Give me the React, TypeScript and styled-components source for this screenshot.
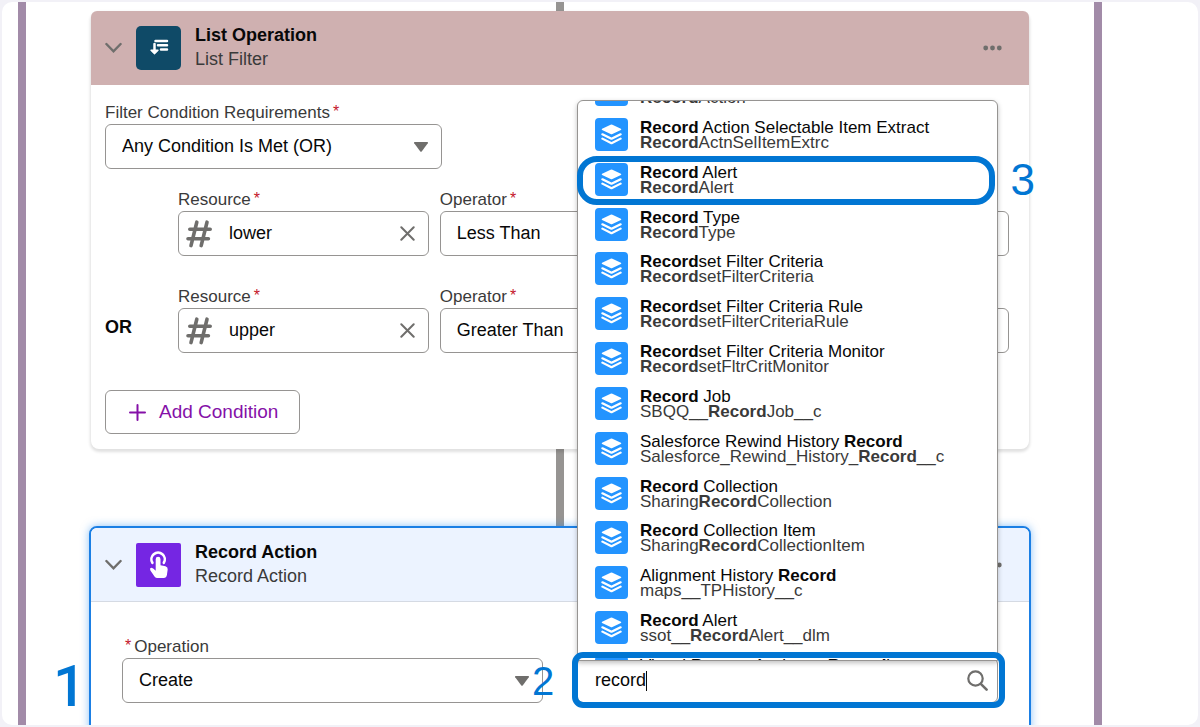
import React from "react";
import styled, { createGlobalStyle } from "styled-components";

const GlobalStyle = createGlobalStyle`
  *, *::before, *::after { box-sizing: border-box; }
  body { margin: 0; background: #f2f1f7; }
  body, button, input, select { font-family: "Liberation Sans", Arial, sans-serif; }
  #root { height: 100vh; }
`;

const Frame = styled.div`
  height: 100%;
  border: 2px solid #f2f1f7;
  border-radius: 12px;
  overflow: hidden;
  background: #fff;
`;

const LoopRegion = styled.main`
  display: flex;
  flex-direction: column;
  min-height: 100%;
  margin: 0 96px 0 16px;
  padding: 0 63px;
  border: solid #a28ba8;
  border-width: 0 8px;
`;

const Connector = styled.div<{ $height: number }>`
  width: 8px;
  height: ${(p) => p.$height}px;
  margin: 0 auto;
  background: #969492;
`;

const Card = styled.section<{ $selected?: boolean }>`
  position: relative;
  border-radius: 8px;
  background: #fff;
  ${(p) =>
    p.$selected
      ? "border: 2px solid #1b7fe4; box-shadow: 0 0 8px #1b86f080;"
      : "margin: 0 2px; box-shadow: 0 2px 3px 1px #0000001f;"}
`;

const CardHeader = styled.header<{ $tone: "rose" | "blue" }>`
  display: flex;
  align-items: center;
  height: 74px;
  padding: 0 27px 0 14px;
  border-radius: 6px 6px 0 0;
  background: ${(p) => (p.$tone === "rose" ? "#cfb0b0" : "#ecf3ff")};
  border-bottom: 1px solid ${(p) => (p.$tone === "rose" ? "#cfb0b0" : "#d5dae3")};
`;

const IconButton = styled.button`
  display: flex;
  padding: 0;
  border: 0;
  background: none;
  color: #6f6e6c;
`;

const Tile = styled.span<{ $color: string; $radius: number }>`
  display: grid;
  place-items: center;
  width: 45px;
  height: 44px;
  margin: 0 14px;
  border-radius: ${(p) => p.$radius}px;
  background: ${(p) => p.$color};
`;

const Heading = styled.div`
  flex: 1;
  padding-bottom: 2px;
  line-height: 24px;
  font-size: 18px;
`;

const Title = styled.h2`
  margin: 0;
  font-size: 18px;
  font-weight: 700;
  color: #080808;
`;

const Subtitle = styled.p`
  margin: 0;
  color: #3a3a3a;
`;

const FilterBody = styled.div`
  display: flex;
  flex-direction: column;
  align-items: flex-start;
  padding: 18px 20px 15px 14px;
`;

const Field = styled.div<{ $width?: number }>`
  display: flex;
  flex-direction: column;
  justify-content: flex-end;
  min-width: 0;
  width: ${(p) => (p.$width ? `${p.$width}px` : "auto")};
`;

const Label = styled.label`
  line-height: 20px;
  margin-bottom: 1px;
  font-size: 17px;
  color: #3a3a3a;
`;

const Required = styled.span`
  margin: 0 3px;
  font-size: 16px;
  line-height: 1;
  vertical-align: 1px;
  color: #c4162a;
`;

const Control = styled.div`
  display: grid;
  align-items: center;
  height: 45px;
  border: 1px solid #969492;
  border-radius: 6px;
  background: #fff;
`;

const Select = styled.select`
  grid-area: 1 / 1;
  width: 100%;
  height: 100%;
  padding: 0 40px 2px 16px;
  border: 0;
  border-radius: 6px;
  appearance: none;
  background: transparent;
  font-size: 18px;
  color: #080808;
`;

const SelectArrow = styled.svg`
  grid-area: 1 / 1;
  justify-self: end;
  margin-right: 13px;
  pointer-events: none;
`;

const ResourceBox = styled(Control)`
  display: flex;
  gap: 17px;
  padding: 0 13px 0 7px;
`;

const TextInput = styled.input`
  flex: 1;
  min-width: 0;
  padding: 0;
  border: 0;
  outline: 0;
  background: transparent;
  font-size: 18px;
  color: #080808;
`;

const FilterRows = styled.div`
  display: flex;
  flex-direction: column;
  gap: 31px;
  width: 100%;
  padding: 21px 0 37px;
`;

const ConditionRow = styled.div`
  display: grid;
  grid-template-columns: 62px 31fr 31fr 38fr;
  column-gap: 11px;
`;

const Joiner = styled.strong`
  align-self: end;
  line-height: 20px;
  padding-bottom: 16px;
  font-size: 18px;
  color: #080808;
`;

const AddButton = styled.button`
  display: flex;
  align-items: center;
  gap: 13px;
  height: 44px;
  padding: 0 21px 0 23px;
  border: 1px solid #969492;
  border-radius: 6px;
  background: #fff;
  font-size: 19px;
  color: #8510a8;
`;

const ActionBody = styled.div`
  display: grid;
  grid-template-columns: 1fr 1fr;
  column-gap: 34px;
  padding: 35px 31px 60px;
`;

const Lookup = styled.div`
  position: relative;
`;

const SearchBox = styled(Control)`
  display: flex;
  padding: 0 9px 0 17px;
`;

const SearchInput = styled(TextInput)`
  flex: none;
  field-sizing: content;
`;

const Caret = styled.span`
  width: 1px;
  height: 20px;
  margin-right: auto;
  background: #080808;
`;

const Menu = styled.div`
  position: absolute;
  z-index: 1;
  left: 0;
  right: 0;
  bottom: 42px;
  height: 561px;
  overflow: hidden;
  border: 1px solid #969492;
  border-radius: 6px 6px 0 0;
  background: #fff;
  box-shadow: 0 2px 5px #00000040;
`;

const Options = styled.ul`
  display: flex;
  flex-direction: column;
  justify-content: space-between;
  height: 616px;
  margin: -28px 0 0;
  padding: 0 17px;
  list-style: none;
`;

const Option = styled.li`
  display: flex;
  gap: 12px;
  height: 33px;
`;

const ObjectTile = styled.span`
  display: grid;
  place-items: center;
  width: 33px;
  height: 33px;
  border-radius: 4px;
  background: #2394ff;
`;

const OptionText = styled.div`
  line-height: 15px;
  padding-top: 2px;
  font-size: 17px;
  white-space: nowrap;
  color: #080808;
`;

const ApiName = styled.div`
  color: #3a3a3a;
`;

const Callout = styled.div<{ $inset: string; $radius: number }>`
  position: absolute;
  z-index: 2;
  inset: ${(p) => p.$inset};
  border: 6px solid #0176d3;
  border-radius: ${(p) => p.$radius}px;
  pointer-events: none;
`;

const Step = styled.span<{ $place: string; $size: number }>`
  position: absolute;
  z-index: 2;
  ${(p) => p.$place}
  line-height: 1;
  font-size: ${(p) => p.$size}px;
  color: #0176d3;
`;

const FirstStep = styled(Step)`
  font-family: Roboto, "Liberation Sans", sans-serif;
  font-weight: 500;
`;

const Chevron = () => (
  <svg width="17" height="11" viewBox="0 0 17 11" fill="none" stroke="currentColor" strokeWidth="2.4" strokeLinecap="round">
    <path d="M1.4 2 8.500 9.300l7.100-7.300" />
  </svg>
);

const Dots = () => (
  <svg width="19" height="6" viewBox="0 0 19 6" fill="currentColor">
    <circle cx="2.700" cy="3" r="2.400" />
    <circle cx="9.500" cy="3" r="2.400" />
    <circle cx="16.300" cy="3" r="2.400" />
  </svg>
);

const Arrow = () => (
  <SelectArrow width="14" height="10" viewBox="0 0 14 10" fill="#6f6e6c">
    <path d="M.6 0h12.800q.9.200.4 1.200L7.700 9.500q-.7.700-1.400 0L.2 1.200Q-.3.200.6 0z" />
  </SelectArrow>
);

const ListGlyph = () => (
  <svg width="20" height="18" viewBox="0 0 20 18" fill="none" stroke="#fff" strokeLinecap="round" strokeLinejoin="round">
    <path d="M6.500 2h11.500M9 6.300h9M12 10.600h6" strokeWidth="2.500" />
    <path d="M5.500 5v8" strokeWidth="2.500" />
    <path d="M2 11.300h7l-3.500 3.500z" strokeWidth="1.400" fill="#fff" />
  </svg>
);

const TouchGlyph = () => (
  <svg width="20" height="28" viewBox="0 0 20 28" fill="#fff">
    <path d="M3.400 11.800A6.700 6.700 0 1 1 14.800 11.800" fill="none" stroke="#fff" strokeWidth="2.600" strokeLinecap="round" />
    <path d="M6.700 8.200a2.400 2.400 0 0 1 4.800 0v6l5 1.100q2.500.8 2.200 3.200l-.8 5.500q-.5 3-3.200 3H8.200q-1.500 0-2.500-1.300L1.400 19.500Q.4 17 2.400 16.800q1.500 0 4.300 3z" />
  </svg>
);

const Hash = () => (
  <svg width="26" height="28" viewBox="0 0 26 28" fill="none" stroke="#6f6e6c" strokeWidth="3.600" strokeLinecap="round">
    <path d="M10.800 2.200 5 25.600M21 2.200l-5.800 23.400M3.800 9.200h20.400M2 18.800h20.400" />
  </svg>
);

const Cross = () => (
  <svg width="15" height="15" viewBox="0 0 15 15" stroke="currentColor" strokeWidth="2" strokeLinecap="round">
    <path d="m1.300 1.300 12.400 12.400M13.700 1.300 1.300 13.700" />
  </svg>
);

const Plus = () => (
  <svg width="17" height="17" viewBox="0 0 17 17" stroke="currentColor" strokeWidth="2" strokeLinecap="round">
    <path d="M8.500 1v15M1 8.500h15" />
  </svg>
);

const Magnifier = () => (
  <svg width="21" height="21" viewBox="0 0 21 21" fill="none" stroke="currentColor" strokeWidth="2.200" strokeLinecap="round">
    <circle cx="8.500" cy="8.500" r="7.200" />
    <path d="m13.800 13.800 5.800 5.800" strokeWidth="2.600" />
  </svg>
);

const Layers = () => (
  <svg width="21" height="21" viewBox="0 0 21 23" preserveAspectRatio="none" fill="#fff">
    <path d="M9.600.8q.9-.5 1.800 0l8.500 4.500q.9.600 0 1.200l-8.500 4.500q-.9.500-1.800 0L1.100 6.500q-.9-.600 0-1.200z" />
    <path d="m1.400 11.200 9.100 5 9.100-5M1.400 16.100l9.100 5 9.100-5" fill="none" stroke="#fff" strokeWidth="2.300" strokeLinecap="round" strokeLinejoin="round" />
  </svg>
);

const objects: [string, string][] = [
  ["Record Action", "RecordAction"],
  ["Record Action Selectable Item Extract", "RecordActnSelItemExtrc"],
  ["Record Alert", "RecordAlert"],
  ["Record Type", "RecordType"],
  ["Recordset Filter Criteria", "RecordsetFilterCriteria"],
  ["Recordset Filter Criteria Rule", "RecordsetFilterCriteriaRule"],
  ["Recordset Filter Criteria Monitor", "RecordsetFltrCritMonitor"],
  ["Record Job", "SBQQ__RecordJob__c"],
  ["Salesforce Rewind History Record", "Salesforce_Rewind_History_Record__c"],
  ["Record Collection", "SharingRecordCollection"],
  ["Record Collection Item", "SharingRecordCollectionItem"],
  ["Alignment History Record", "maps__TPHistory__c"],
  ["Record Alert", "ssot__RecordAlert__dlm"],
  ["Visual Remote Assistant Recording", "VisualRemoteAssistantRecording"],
];

const Match = ({ text }: { text: string }) => (
  <>
    {text.split(/(Record)/).map((part, i) => (part === "Record" ? <b key={i}>{part}</b> : part))}
  </>
);

interface ConditionProps {
  id: string;
  joiner?: string;
  resource: string;
  operator: string;
}

const Condition = ({ id, joiner, resource, operator }: ConditionProps) => (
  <ConditionRow>
    <Joiner>{joiner}</Joiner>
    <Field>
      <Label htmlFor={`${id}-resource`}>Resource<Required>*</Required></Label>
      <ResourceBox>
        <Hash />
        <TextInput id={`${id}-resource`} defaultValue={resource} />
        <IconButton type="button" aria-label="Clear"><Cross /></IconButton>
      </ResourceBox>
    </Field>
    <Field>
      <Label htmlFor={`${id}-operator`}>Operator<Required>*</Required></Label>
      <Control>
        <Select id={`${id}-operator`}><option>{operator}</option></Select>
        <Arrow />
      </Control>
    </Field>
    <Field>
      <Control><TextInput aria-label="Value" /></Control>
    </Field>
  </ConditionRow>
);

export default function App() {
  return (
    <>
      <GlobalStyle />
      <Frame>
        <LoopRegion>
          <Connector $height={9} />
          <Card>
            <CardHeader $tone="rose">
              <IconButton type="button" aria-label="Collapse"><Chevron /></IconButton>
              <Tile $color="#0f4a67" $radius={5}><ListGlyph /></Tile>
              <Heading>
                <Title>List Operation</Title>
                <Subtitle>List Filter</Subtitle>
              </Heading>
              <IconButton type="button" aria-label="More actions"><Dots /></IconButton>
            </CardHeader>
            <FilterBody>
              <Field $width={337}>
                <Label htmlFor="requirements">Filter Condition Requirements<Required>*</Required></Label>
                <Control>
                  <Select id="requirements"><option>Any Condition Is Met (OR)</option></Select>
                  <Arrow />
                </Control>
              </Field>
              <FilterRows>
                <Condition id="first" resource="lower" operator="Less Than" />
                <Condition id="second" joiner="OR" resource="upper" operator="Greater Than" />
              </FilterRows>
              <AddButton type="button"><Plus />Add Condition</AddButton>
            </FilterBody>
          </Card>
          <Connector $height={77} />
          <Card $selected>
            <CardHeader $tone="blue">
              <IconButton type="button" aria-label="Collapse"><Chevron /></IconButton>
              <Tile $color="#7526e3" $radius={2}><TouchGlyph /></Tile>
              <Heading>
                <Title>Record Action</Title>
                <Subtitle>Record Action</Subtitle>
              </Heading>
              <IconButton type="button" aria-label="More actions"><Dots /></IconButton>
            </CardHeader>
            <ActionBody>
              <Field>
                <Label htmlFor="operation"><Required>*</Required>Operation</Label>
                <Control>
                  <Select id="operation"><option>Create</option></Select>
                  <Arrow />
                </Control>
              </Field>
              <Field>
                <Lookup>
                  <SearchBox>
                    <SearchInput aria-label="Object" defaultValue="record" />
                    <Caret />
                    <IconButton type="button" aria-label="Search"><Magnifier /></IconButton>
                  </SearchBox>
                  <Menu>
                    <Options>
                      {objects.map(([name, api]) => (
                        <Option key={api}>
                          <ObjectTile><Layers /></ObjectTile>
                          <OptionText>
                            <Match text={name} />
                            <ApiName><Match text={api} /></ApiName>
                          </OptionText>
                        </Option>
                      ))}
                    </Options>
                  </Menu>
                  <Callout $inset="-6px -7px -5px -5px" $radius={11} />
                  <Callout $inset="-502px 3px 498px 0" $radius={20} />
                  <Step $place="left: -45px; top: 3px;" $size={40}>2</Step>
                  <Step $place="right: -37px; top: -500px;" $size={44}>3</Step>
                </Lookup>
              </Field>
            </ActionBody>
            <FirstStep $place="left: -38px; top: 129px;" $size={58}>1</FirstStep>
          </Card>
        </LoopRegion>
      </Frame>
    </>
  );
}
